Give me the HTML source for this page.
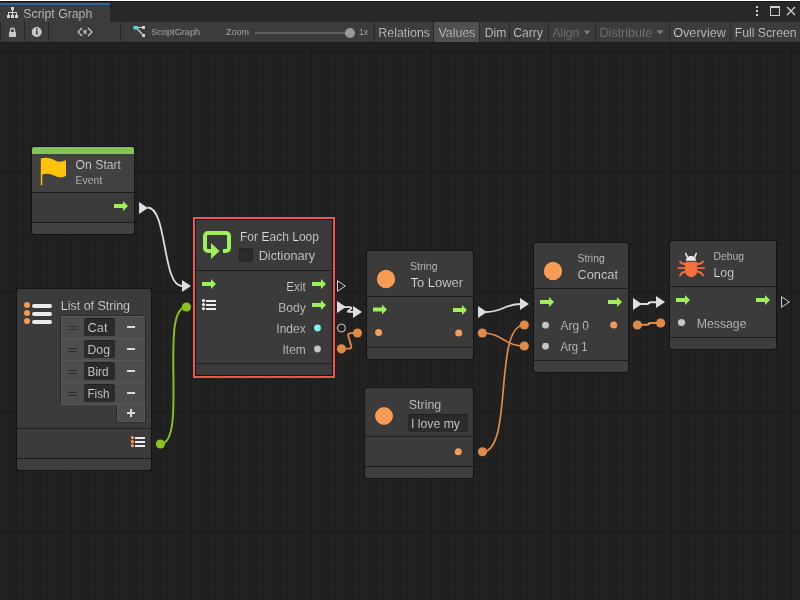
<!DOCTYPE html>
<html><head><meta charset="utf-8"><style>
html,body{margin:0;padding:0;width:800px;height:600px;overflow:hidden;background:#212121}
svg{display:block;will-change:transform}
text{font-family:"Liberation Sans", sans-serif;stroke:#3c3c3c;stroke-width:0.2px;paint-order:fill stroke}
</style></head><body>
<svg width="800" height="600" viewBox="0 0 800 600">
<rect x="0" y="0" width="800" height="600" fill="#212121" />
<path d="M11.5 43V600 M23.5 43V600 M35.5 43V600 M47.5 43V600 M59.5 43V600 M83.5 43V600 M95.5 43V600 M107.5 43V600 M119.5 43V600 M131.5 43V600 M143.5 43V600 M155.5 43V600 M167.5 43V600 M179.5 43V600 M203.5 43V600 M215.5 43V600 M227.5 43V600 M239.5 43V600 M251.5 43V600 M263.5 43V600 M275.5 43V600 M287.5 43V600 M299.5 43V600 M323.5 43V600 M335.5 43V600 M347.5 43V600 M359.5 43V600 M371.5 43V600 M383.5 43V600 M395.5 43V600 M407.5 43V600 M419.5 43V600 M443.5 43V600 M455.5 43V600 M467.5 43V600 M479.5 43V600 M491.5 43V600 M503.5 43V600 M515.5 43V600 M527.5 43V600 M539.5 43V600 M563.5 43V600 M575.5 43V600 M587.5 43V600 M599.5 43V600 M611.5 43V600 M623.5 43V600 M635.5 43V600 M647.5 43V600 M659.5 43V600 M683.5 43V600 M695.5 43V600 M707.5 43V600 M719.5 43V600 M731.5 43V600 M743.5 43V600 M755.5 43V600 M767.5 43V600 M779.5 43V600" stroke="#000" stroke-opacity="0.055" stroke-width="1" fill="none"/>
<path d="M0 64.5H800 M0 76.5H800 M0 88.5H800 M0 100.5H800 M0 112.5H800 M0 124.5H800 M0 136.5H800 M0 148.5H800 M0 160.5H800 M0 184.5H800 M0 196.5H800 M0 208.5H800 M0 220.5H800 M0 232.5H800 M0 244.5H800 M0 256.5H800 M0 268.5H800 M0 280.5H800 M0 304.5H800 M0 316.5H800 M0 328.5H800 M0 340.5H800 M0 352.5H800 M0 364.5H800 M0 376.5H800 M0 388.5H800 M0 400.5H800 M0 424.5H800 M0 436.5H800 M0 448.5H800 M0 460.5H800 M0 472.5H800 M0 484.5H800 M0 496.5H800 M0 508.5H800 M0 520.5H800 M0 544.5H800 M0 556.5H800 M0 568.5H800 M0 580.5H800 M0 592.5H800" stroke="#000" stroke-opacity="0.035" stroke-width="1" fill="none"/>
<path d="M71.5 43V600 M191.5 43V600 M311.5 43V600 M431.5 43V600 M551.5 43V600 M671.5 43V600 M791.5 43V600 M0 52.5H800 M0 172.5H800 M0 292.5H800 M0 412.5H800 M0 532.5H800" stroke="#1a1a1a" stroke-width="1" fill="none"/>
<rect x="0" y="0" width="800" height="1" fill="#ffffff" />
<rect x="0" y="1" width="800" height="1" fill="#161616" />
<rect x="0" y="2" width="800" height="20" fill="#282828" />
<rect x="0" y="3" width="110" height="2" fill="#2f66a0" />
<rect x="0" y="5" width="110" height="17" fill="#3c3c3c" />
<g fill="#d4d4d4"><rect x="11" y="7" width="3" height="3"/><rect x="12" y="10" width="1" height="5"/><rect x="8" y="12" width="9" height="1"/><rect x="8" y="12" width="1" height="3"/><rect x="16" y="12" width="1" height="3"/><rect x="7" y="15" width="3" height="3"/><rect x="11" y="15" width="3" height="3"/><rect x="15" y="15" width="3" height="3"/></g>
<text x="23.3" y="18" font-size="12" fill="#d2d2d2" text-anchor="start" textLength="69" lengthAdjust="spacingAndGlyphs" >Script Graph</text>
<g fill="#d0d0d0"><rect x="756" y="6" width="2" height="2"/><rect x="756" y="10" width="2" height="2"/><rect x="756" y="14" width="2" height="2"/></g>
<rect x="770.5" y="6.5" width="9" height="9" fill="none" stroke="#d0d0d0" stroke-width="1"/><rect x="770" y="6" width="10" height="2" fill="#d0d0d0"/>
<path d="M787 7L795 15M795 7L787 15" stroke="#d0d0d0" stroke-width="1.3"/>
<rect x="0" y="22" width="800" height="20" fill="#3c3c3c" />
<rect x="0" y="42" width="800" height="1" fill="#1e1e1e" />
<rect x="0" y="22" width="1" height="20" fill="#282828" />
<rect x="24" y="22" width="1" height="20" fill="#282828" />
<rect x="48" y="22" width="1" height="20" fill="#282828" />
<rect x="120" y="22" width="1" height="20" fill="#282828" />
<rect x="374" y="22" width="1" height="20" fill="#282828" />
<rect x="433" y="22" width="1" height="20" fill="#282828" />
<rect x="479" y="22" width="1" height="20" fill="#282828" />
<rect x="509" y="22" width="1" height="20" fill="#282828" />
<rect x="548" y="22" width="1" height="20" fill="#282828" />
<rect x="595" y="22" width="1" height="20" fill="#282828" />
<rect x="669" y="22" width="1" height="20" fill="#282828" />
<rect x="730" y="22" width="1" height="20" fill="#282828" />
<rect x="434" y="22" width="45" height="20" fill="#505050" />
<g fill="#c8c8c8"><rect x="9" y="32" width="7" height="5" rx="0.5"/></g><path d="M10.5 32V30.3a2 2 0 0 1 4 0V32" fill="none" stroke="#c8c8c8" stroke-width="1.4"/>
<circle cx="36.7" cy="32" r="5" fill="#c8c8c8"/><rect x="36" y="30.5" width="1.6" height="4" fill="#3c3c3c"/><rect x="36" y="28.3" width="1.6" height="1.5" fill="#3c3c3c"/>
<path d="M82 28L78 32L82 36M88 28L92 32L88 36M83.5 30.2L86.5 33.8M86.5 30.2L83.5 33.8" stroke="#d0d0d0" stroke-width="1.1" fill="none"/>
<path d="M136 27.5L143.5 27.5M136 27.5L143.5 35.5" stroke="#d0d0d0" stroke-width="1.2"/><rect x="133.5" y="26" width="4" height="3.5" fill="#5de0c8"/><rect x="142" y="26" width="3" height="3" fill="#d0d0d0"/><rect x="142" y="34" width="3" height="3" fill="#d0d0d0"/>
<text x="151.2" y="35" font-size="9.5" fill="#c8c8c8" text-anchor="start" textLength="49" lengthAdjust="spacingAndGlyphs" >ScriptGraph</text>
<text x="226" y="35" font-size="9.5" fill="#c8c8c8" text-anchor="start" textLength="23" lengthAdjust="spacingAndGlyphs" >Zoom</text>
<rect x="255" y="32" width="95" height="2" fill="#5e5e5e" />
<circle cx="350" cy="33" r="5" fill="#9a9a9a"/>
<text x="359" y="35" font-size="9.5" fill="#c8c8c8" text-anchor="start" textLength="9" lengthAdjust="spacingAndGlyphs" >1x</text>
<text x="378.3" y="36.7" font-size="12" fill="#d2d2d2" text-anchor="start" textLength="51.7" lengthAdjust="spacingAndGlyphs" >Relations</text>
<text x="438.5" y="36.7" font-size="12" fill="#d2d2d2" text-anchor="start" textLength="37" lengthAdjust="spacingAndGlyphs" >Values</text>
<text x="484.8" y="36.7" font-size="12" fill="#d2d2d2" text-anchor="start" textLength="21.5" lengthAdjust="spacingAndGlyphs" >Dim</text>
<text x="513.2" y="36.7" font-size="12" fill="#d2d2d2" text-anchor="start" textLength="29.6" lengthAdjust="spacingAndGlyphs" >Carry</text>
<text x="552.5" y="36.7" font-size="12" fill="#7c7c7c" text-anchor="start" textLength="26.7" lengthAdjust="spacingAndGlyphs" >Align</text>
<path d="M583.7 30.5H590.4L587 34.5Z" fill="#7c7c7c"/>
<text x="599.6" y="36.7" font-size="12" fill="#7c7c7c" text-anchor="start" textLength="52.8" lengthAdjust="spacingAndGlyphs" >Distribute</text>
<path d="M656.4 30.2H663.7L660 34.3Z" fill="#7c7c7c"/>
<text x="673.2" y="36.7" font-size="12" fill="#d2d2d2" text-anchor="start" textLength="52.7" lengthAdjust="spacingAndGlyphs" >Overview</text>
<text x="734.8" y="36.7" font-size="12" fill="#d2d2d2" text-anchor="start" textLength="61.7" lengthAdjust="spacingAndGlyphs" >Full Screen</text>
<rect x="31" y="146" width="104" height="89" rx="2.5" fill="#131313"/>
<rect x="32" y="147" width="102" height="48" rx="2" fill="#414141"/>
<rect x="32" y="192" width="102" height="1" fill="#1c1c1c" />
<rect x="32" y="193" width="102" height="29" fill="#3b3b3b" />
<rect x="32" y="222" width="102" height="1" fill="#1c1c1c" />
<rect x="32" y="223" width="102" height="11" rx="2" fill="#414141"/>
<rect x="32" y="223" width="102" height="4" fill="#414141" />
<rect x="32" y="147" width="102" height="7" rx="2" fill="#86c350"/><rect x="32" y="150" width="102" height="4" fill="#86c350"/>
<path d="M40.8 158.5C46 157 51 158 55 160.5C59 162.8 63 161.5 66 160V176C63 177.5 59 178 55 176C51 174 46 173 42.3 174.5V185.2H40.8Z" fill="#ffc20c"/>
<text x="75.6" y="168.75" font-size="12" fill="#dedede" text-anchor="start" textLength="45.4" lengthAdjust="spacingAndGlyphs" >On Start</text>
<text x="75.6" y="183.75" font-size="10" fill="#d0d0d0" text-anchor="start" textLength="26.7" lengthAdjust="spacingAndGlyphs" >Event</text>
<path d="M114 204H123V201L128 206L123 211V208H114Z" fill="#9ef05c"/>
<rect x="16" y="288" width="136" height="183" rx="2.5" fill="#131313"/>
<rect x="17" y="289" width="134" height="142" rx="2" fill="#3b3b3b"/>
<rect x="17" y="428" width="134" height="1" fill="#1c1c1c" />
<rect x="17" y="429" width="134" height="29" fill="#3b3b3b" />
<rect x="17" y="458" width="134" height="1" fill="#1c1c1c" />
<rect x="17" y="459" width="134" height="11" rx="2" fill="#3e3e3e"/>
<rect x="17" y="459" width="134" height="4" fill="#3e3e3e" />
<circle cx="27" cy="305" r="3" fill="#f79b55"/>
<rect x="32" y="304" width="20" height="4" rx="2" fill="#ececec"/>
<circle cx="27" cy="313" r="3" fill="#f79b55"/>
<rect x="32" y="312" width="20" height="4" rx="2" fill="#ececec"/>
<circle cx="27" cy="321" r="3" fill="#f79b55"/>
<rect x="32" y="320" width="20" height="4" rx="2" fill="#ececec"/>
<text x="60.8" y="310" font-size="12" fill="#dedede" text-anchor="start" textLength="69.2" lengthAdjust="spacingAndGlyphs" >List of String</text>
<rect x="60" y="315" width="86" height="90" fill="#2a2a2a" />
<rect x="61" y="316" width="84" height="88" fill="#585858" />
<rect x="62" y="317" width="83" height="21" fill="#4d4d4d" />
<rect x="68" y="326" width="9" height="1" fill="#2a2a2a" />
<rect x="68" y="329" width="9" height="1" fill="#2a2a2a" />
<rect x="84" y="318" width="31" height="18" rx="3" fill="#1f1f1f"/><rect x="84" y="319" width="31" height="17" rx="3" fill="#2b2b2b"/>
<text x="87.5" y="332" font-size="12" fill="#dcdcdc" text-anchor="start" textLength="20" lengthAdjust="spacingAndGlyphs" >Cat</text>
<rect x="127" y="326" width="8" height="2" fill="#d8d8d8" />
<rect x="62" y="339" width="83" height="21" fill="#4d4d4d" />
<rect x="68" y="348" width="9" height="1" fill="#2a2a2a" />
<rect x="68" y="351" width="9" height="1" fill="#2a2a2a" />
<rect x="84" y="340" width="31" height="18" rx="3" fill="#1f1f1f"/><rect x="84" y="341" width="31" height="17" rx="3" fill="#2b2b2b"/>
<text x="87.5" y="354" font-size="12" fill="#dcdcdc" text-anchor="start" textLength="22.5" lengthAdjust="spacingAndGlyphs" >Dog</text>
<rect x="127" y="348" width="8" height="2" fill="#d8d8d8" />
<rect x="62" y="361" width="83" height="21" fill="#4d4d4d" />
<rect x="68" y="370" width="9" height="1" fill="#2a2a2a" />
<rect x="68" y="373" width="9" height="1" fill="#2a2a2a" />
<rect x="84" y="362" width="31" height="18" rx="3" fill="#1f1f1f"/><rect x="84" y="363" width="31" height="17" rx="3" fill="#2b2b2b"/>
<text x="87.5" y="376" font-size="12" fill="#dcdcdc" text-anchor="start" textLength="21" lengthAdjust="spacingAndGlyphs" >Bird</text>
<rect x="127" y="370" width="8" height="2" fill="#d8d8d8" />
<rect x="62" y="383" width="83" height="21" fill="#4d4d4d" />
<rect x="68" y="392" width="9" height="1" fill="#2a2a2a" />
<rect x="68" y="395" width="9" height="1" fill="#2a2a2a" />
<rect x="84" y="384" width="31" height="18" rx="3" fill="#1f1f1f"/><rect x="84" y="385" width="31" height="17" rx="3" fill="#2b2b2b"/>
<text x="87.5" y="398" font-size="12" fill="#dcdcdc" text-anchor="start" textLength="22" lengthAdjust="spacingAndGlyphs" >Fish</text>
<rect x="127" y="392" width="8" height="2" fill="#d8d8d8" />
<rect x="116" y="404" width="30" height="19" fill="#2a2a2a" />
<rect x="117" y="404" width="28" height="18" fill="#585858" />
<rect x="118" y="405" width="26" height="16" fill="#4d4d4d" />
<rect x="61" y="404" width="84" height="1" fill="#585858" />
<rect x="127" y="412" width="8" height="2" fill="#dedede" />
<rect x="130" y="409" width="2" height="8" fill="#dedede" />
<circle cx="132.4" cy="437.7" r="1.6" fill="#f79b55"/>
<rect x="135" y="437" width="10" height="2" fill="#ececec" />
<circle cx="132.4" cy="441.7" r="1.6" fill="#f79b55"/>
<rect x="135" y="441" width="10" height="2" fill="#ececec" />
<circle cx="132.4" cy="445.7" r="1.6" fill="#f79b55"/>
<rect x="135" y="445" width="10" height="2" fill="#ececec" />
<rect x="193" y="217" width="142" height="161" fill="#f0544f" />
<rect x="195" y="219" width="138" height="157" fill="#151515" />
<rect x="196" y="220" width="136" height="53" fill="#3b3b3b"/>
<rect x="196" y="270" width="136" height="1" fill="#1c1c1c" />
<rect x="196" y="271" width="136" height="92" fill="#3b3b3b" />
<rect x="196" y="363" width="136" height="1" fill="#1c1c1c" />
<rect x="196" y="364" width="136" height="11" fill="#3b3b3b" />
<path d="M205 249V236a3 3 0 0 1 3-3H226a3 3 0 0 1 3 3V248a3 3 0 0 1-3 3H223" fill="none" stroke="#9ef05c" stroke-width="4"/>
<path d="M205 245V248a3 3 0 0 0 3 3H212" fill="none" stroke="#9ef05c" stroke-width="4"/>
<path d="M211 243L219.5 251L211 259Z" fill="#9ef05c"/>
<text x="240" y="241" font-size="12" fill="#dedede" text-anchor="start" textLength="79" lengthAdjust="spacingAndGlyphs" >For Each Loop</text>
<rect x="239.5" y="248.5" width="13" height="13" rx="2" fill="#2b2b2b" stroke="#232323"/>
<text x="258.7" y="259.9" font-size="12" fill="#dedede" text-anchor="start" textLength="56.5" lengthAdjust="spacingAndGlyphs" >Dictionary</text>
<path d="M202 282H211V279L216 284L211 289V286H202Z" fill="#9ef05c"/>
<circle cx="203.5" cy="300.6" r="1.6" fill="#ececec"/>
<rect x="206" y="300" width="10" height="2" fill="#ececec" />
<circle cx="203.5" cy="304.6" r="1.6" fill="#ececec"/>
<rect x="206" y="304" width="10" height="2" fill="#ececec" />
<circle cx="203.5" cy="308.6" r="1.6" fill="#ececec"/>
<rect x="206" y="308" width="10" height="2" fill="#ececec" />
<text x="305.8" y="290.6" font-size="12" fill="#d2d2d2" text-anchor="end" textLength="19.5" lengthAdjust="spacingAndGlyphs" >Exit</text>
<path d="M312 282H321V279L326 284L321 289V286H312Z" fill="#9ef05c"/>
<text x="305.8" y="312" font-size="12" fill="#d2d2d2" text-anchor="end" textLength="27.5" lengthAdjust="spacingAndGlyphs" >Body</text>
<path d="M312 303H321V300L326 305L321 310V307H312Z" fill="#9ef05c"/>
<text x="305.8" y="333" font-size="12" fill="#d2d2d2" text-anchor="end" textLength="29.5" lengthAdjust="spacingAndGlyphs" >Index</text>
<circle cx="317.5" cy="328" r="3.4" fill="#7df2e6"/>
<text x="305.8" y="354.2" font-size="12" fill="#d2d2d2" text-anchor="end" textLength="23.3" lengthAdjust="spacingAndGlyphs" >Item</text>
<circle cx="317.5" cy="349" r="3.4" fill="#c4c4c4"/>
<rect x="366" y="250" width="108" height="110" rx="2.5" fill="#131313"/>
<rect x="367" y="251" width="106" height="48" rx="2" fill="#3b3b3b"/>
<rect x="367" y="296" width="106" height="1" fill="#1c1c1c" />
<rect x="367" y="297" width="106" height="50" fill="#3b3b3b" />
<rect x="367" y="347" width="106" height="1" fill="#1c1c1c" />
<rect x="367" y="348" width="106" height="11" rx="2" fill="#3e3e3e"/>
<rect x="367" y="348" width="106" height="4" fill="#3e3e3e" />
<circle cx="386" cy="279" r="10.0" fill="#2f3236"/><circle cx="386" cy="279" r="9.2" fill="#f79b55"/>
<text x="410" y="269.8" font-size="10.5" fill="#d2d2d2" text-anchor="start" textLength="27.6" lengthAdjust="spacingAndGlyphs" >String</text>
<text x="410.5" y="287" font-size="13" fill="#dedede" text-anchor="start" textLength="52.5" lengthAdjust="spacingAndGlyphs" >To Lower</text>
<path d="M373 307.5H382V304.5L387 309.5L382 314.5V311.5H373Z" fill="#9ef05c"/>
<circle cx="378.6" cy="332.6" r="3.5" fill="#f79b55"/>
<path d="M453 308H462V305L467 310L462 315V312H453Z" fill="#9ef05c"/>
<circle cx="458.7" cy="333" r="3.5" fill="#f79b55"/>
<rect x="533" y="242" width="96" height="131" rx="2.5" fill="#131313"/>
<rect x="534" y="243" width="94" height="48" rx="2" fill="#3b3b3b"/>
<rect x="534" y="288" width="94" height="1" fill="#1c1c1c" />
<rect x="534" y="289" width="94" height="71" fill="#3b3b3b" />
<rect x="534" y="360" width="94" height="1" fill="#1c1c1c" />
<rect x="534" y="361" width="94" height="11" rx="2" fill="#3e3e3e"/>
<rect x="534" y="361" width="94" height="4" fill="#3e3e3e" />
<circle cx="553" cy="271" r="10.0" fill="#2f3236"/><circle cx="553" cy="271" r="9.2" fill="#f79b55"/>
<text x="577.5" y="262.3" font-size="10.5" fill="#d2d2d2" text-anchor="start" textLength="27.3" lengthAdjust="spacingAndGlyphs" >String</text>
<text x="577.5" y="279.2" font-size="13" fill="#dedede" text-anchor="start" textLength="40.5" lengthAdjust="spacingAndGlyphs" >Concat</text>
<path d="M540 300H549V297L554 302L549 307V304H540Z" fill="#9ef05c"/>
<path d="M608 300H617V297L622 302L617 307V304H608Z" fill="#9ef05c"/>
<circle cx="545.5" cy="325.2" r="3.4" fill="#c4c4c4"/>
<text x="560.5" y="329.6" font-size="12" fill="#d2d2d2" text-anchor="start" textLength="28.5" lengthAdjust="spacingAndGlyphs" >Arg 0</text>
<circle cx="613.7" cy="325" r="3.5" fill="#f79b55"/>
<circle cx="545.5" cy="346.2" r="3.4" fill="#c4c4c4"/>
<text x="560.5" y="350.6" font-size="12" fill="#d2d2d2" text-anchor="start" textLength="27" lengthAdjust="spacingAndGlyphs" >Arg 1</text>
<rect x="669" y="240" width="108" height="110" rx="2.5" fill="#131313"/>
<rect x="670" y="241" width="106" height="48" rx="2" fill="#3b3b3b"/>
<rect x="670" y="286" width="106" height="1" fill="#1c1c1c" />
<rect x="670" y="287" width="106" height="50" fill="#3b3b3b" />
<rect x="670" y="337" width="106" height="1" fill="#1c1c1c" />
<rect x="670" y="338" width="106" height="11" rx="2" fill="#3e3e3e"/>
<rect x="670" y="338" width="106" height="4" fill="#3e3e3e" />
<g fill="none" stroke="#f56e3c" stroke-width="1.8" stroke-linecap="round"><path d="M680 261.5C681 263.5 683 264 685.5 264"/><path d="M703 261.5C702 263.5 700 264 697.5 264"/><path d="M678.5 268.2H685"/><path d="M698 268.2H704"/><path d="M680 275.5C681 273 683 272 685.5 271.5"/><path d="M703 275.5C702 273 700 272 697.5 271.5"/></g>
<path d="M685 263C685 262 686 261.8 687 261.8H695.5C696.5 261.8 697.2 262 697.2 263V270.5C697.2 274.5 694.5 277 691.1 277C687.7 277 685 274.5 685 270.5Z" fill="#f56e3c"/>
<path d="M686 260.8C686 257.5 688.5 256 691 256C693.5 256 696 257.5 696 260.8Z" fill="#ececec"/><path d="M687.2 257L685.8 253.5M694.8 257L696.2 253.5" stroke="#ececec" stroke-width="1.6" stroke-linecap="round"/>
<text x="713.5" y="260.3" font-size="10.5" fill="#d2d2d2" text-anchor="start" textLength="30.5" lengthAdjust="spacingAndGlyphs" >Debug</text>
<text x="713.5" y="277" font-size="13" fill="#dedede" text-anchor="start" textLength="20.5" lengthAdjust="spacingAndGlyphs" >Log</text>
<path d="M676 298H685V295L690 300L685 305V302H676Z" fill="#9ef05c"/>
<path d="M756 298H765V295L770 300L765 305V302H756Z" fill="#9ef05c"/>
<circle cx="681.5" cy="322.5" r="3.6" fill="#c4c4c4"/>
<text x="696.8" y="327.8" font-size="12" fill="#d2d2d2" text-anchor="start" textLength="49.7" lengthAdjust="spacingAndGlyphs" >Message</text>
<rect x="364" y="387" width="110" height="92" rx="2.5" fill="#131313"/>
<rect x="365" y="388" width="108" height="51" rx="2" fill="#3b3b3b"/>
<rect x="365" y="436" width="108" height="1" fill="#1c1c1c" />
<rect x="365" y="437" width="108" height="29" fill="#3b3b3b" />
<rect x="365" y="466" width="108" height="1" fill="#1c1c1c" />
<rect x="365" y="467" width="108" height="11" rx="2" fill="#3e3e3e"/>
<rect x="365" y="467" width="108" height="4" fill="#3e3e3e" />
<circle cx="384" cy="416" r="9.8" fill="#2f3236"/><circle cx="384" cy="416" r="9" fill="#f79b55"/>
<text x="408.75" y="408.6" font-size="12" fill="#d2d2d2" text-anchor="start" textLength="32.5" lengthAdjust="spacingAndGlyphs" >String</text>
<rect x="408" y="414" width="60" height="18" rx="3" fill="#1f1f1f"/><rect x="408" y="415" width="60" height="17" rx="3" fill="#2b2b2b"/>
<text x="411" y="428" font-size="12" fill="#dcdcdc" text-anchor="start" textLength="49" lengthAdjust="spacingAndGlyphs" >I love my</text>
<circle cx="458.25" cy="451.75" r="3.5" fill="#f79b55"/>
<path d="M147.5 207.5C167.5 207.5 162 286 182 286" fill="none" stroke="#dcdcdc" stroke-width="1.8"/>
<path d="M160.4 444C188.4 444 158.4 307 186.4 307" fill="none" stroke="#8cc21f" stroke-width="1.9"/>
<path d="M344 307.2H349.5C351.8 307.2 351.8 308.3 350.6 309.2L348.2 311C347.4 311.6 347.8 311.9 348.8 311.9H354" fill="none" stroke="#dcdcdc" stroke-width="1.7"/>
<path d="M486 312C503 312 504 304 521 304" fill="none" stroke="#dcdcdc" stroke-width="1.9"/>
<path d="M641 304H647.5C648.5 304 649 302.2 650 302.2H657" fill="none" stroke="#dcdcdc" stroke-width="2"/><circle cx="648.8" cy="303" r="1.1" fill="#f4f4f4"/>
<path d="M341.4 348.6H349.3C351.3 348.6 351.7 347.3 351.2 345.8L348.4 336.6C347.9 334.6 348.4 333.1 350.2 333.1H357.5" fill="none" stroke="#e08a4a" stroke-width="1.9"/>
<path d="M482.3 333C502.3 333 504.29999999999995 346 524.3 346" fill="none" stroke="#e08a4a" stroke-width="1.7"/>
<path d="M482.5 451.75C513.5 451.75 493.29999999999995 325 524.3 325" fill="none" stroke="#e08a4a" stroke-width="1.7"/>
<path d="M637.4 324.8H647.5C648.5 324.8 649 323 650 323H660.6" fill="none" stroke="#e08a4a" stroke-width="2"/><circle cx="648.8" cy="323.9" r="1.1" fill="#f0a060"/>
<path d="M139 202L148 208L139 214Z" fill="#dedede"/>
<path d="M182 280L191 286L182 292Z" fill="#dedede"/>
<circle cx="186.4" cy="307" r="4.6" fill="#8cc21f"/>
<circle cx="160.4" cy="444" r="4.6" fill="#8cc21f"/>
<path d="M337.5 280.7L345.3 286L337.5 291.3Z" fill="none" stroke="#d0d0d0" stroke-width="1"/>
<path d="M337 301L346 307L337 313Z" fill="#dedede"/>
<circle cx="341.4" cy="328" r="4" fill="none" stroke="#d0d0d0" stroke-width="1"/>
<circle cx="341.4" cy="348.8" r="4.6" fill="#e08a4a"/>
<path d="M353 306L362 312L353 318Z" fill="#dedede"/>
<circle cx="357.5" cy="333" r="4.6" fill="#e08a4a"/>
<path d="M478 306L487 312L478 318Z" fill="#dedede"/>
<circle cx="482.3" cy="333" r="4.6" fill="#e08a4a"/>
<circle cx="482.5" cy="451.75" r="4.6" fill="#e08a4a"/>
<path d="M520 298L529 304L520 310Z" fill="#dedede"/>
<circle cx="524.3" cy="325" r="4.6" fill="#e08a4a"/>
<circle cx="524.3" cy="346" r="4.6" fill="#e08a4a"/>
<path d="M633 298L642 304L633 310Z" fill="#dedede"/>
<circle cx="637.4" cy="325" r="4.6" fill="#e08a4a"/>
<path d="M656 296L665 302L656 308Z" fill="#dedede"/>
<circle cx="660.6" cy="323" r="4.6" fill="#e08a4a"/>
<path d="M781.5 296.7L789.3 302L781.5 307.3Z" fill="none" stroke="#d0d0d0" stroke-width="1"/>
</svg>
</body></html>
